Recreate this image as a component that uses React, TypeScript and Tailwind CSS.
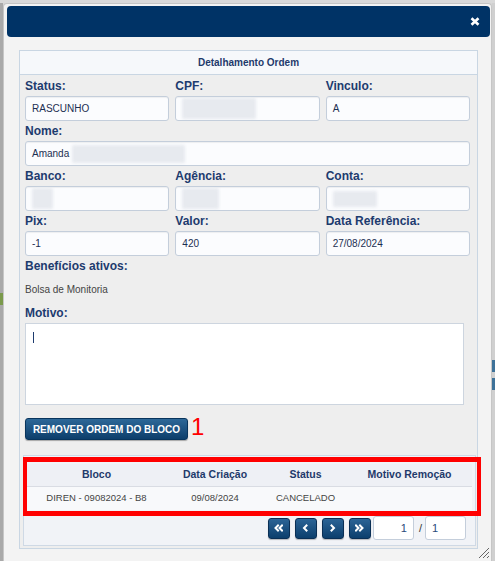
import React from "react";

const Label = ({ children }: { children: React.ReactNode }) => (
  <div className="h-[15px] leading-[15px] text-[12px] font-bold text-[#1d3b6e] mb-[2px] whitespace-nowrap">{children}</div>
);

const Blur = ({ w, h }: { w: number; h: number }) => (
  <span
    className="inline-block bg-[#e7eaef] blur-[1.5px] rounded-[2px]"
    style={{ width: w, height: h }}
  />
);

const Input = ({ children, pl = 6 }: { children?: React.ReactNode; pl?: number }) => (
  <div
    className="h-[25px] border border-[#c4cedb] rounded-[3px] bg-[#fbfcfe] shadow-[inset_0_1px_1px_rgba(0,0,0,0.06)] flex items-center text-[10px] text-[#1b2f52] whitespace-nowrap overflow-hidden"
    style={{ paddingLeft: pl }}
  >
    {children}
  </div>
);

const Field = ({ label, children }: { label: string; children?: React.ReactNode }) => (
  <div className="flex flex-col">
    <Label>{label}</Label>
    <Input>{children}</Input>
  </div>
);

const PagBtn = ({ d }: { d: string }) => (
  <div className="w-[22px] h-[21px] rounded-[3px] border border-[#0a2f55] bg-linear-to-b from-[#2b6496] to-[#0c3f6d] flex items-center justify-center shadow-[0_1px_1px_rgba(0,0,0,0.25)]">
    <svg width="9" height="8" viewBox="0 0 9 8">
      <path d={d} fill="none" stroke="#fff" strokeWidth="2" strokeLinecap="square" strokeLinejoin="miter" />
    </svg>
  </div>
);

export default function App() {
  return (
    <div className="w-[495px] h-[561px] overflow-hidden bg-[#d6d6d6] flex flex-col font-['Liberation_Sans',Arial,sans-serif] relative">
      <div className="h-[3px] shrink-0 bg-[#d9d9d9]" />
      <div className="flex flex-1 min-h-0">
        {/* left strip of page behind */}
        <div className="w-[3px] shrink-0 bg-[#a9a9a9] flex flex-col">
          <div className="h-[290px] shrink-0" />
          <div className="h-[12px] shrink-0 bg-[#7b9a4c]" />
        </div>

        {/* modal */}
        <div className="w-[489px] shrink-0 bg-[#f3f3f3] border border-[#c6c6c6] border-b-0 rounded-t-[4px] pl-[3px] pr-[1px] pt-[2px] relative">
          <div className="h-[31px] bg-[#003366] rounded-[4px] flex items-center justify-end pr-[10px]">
            <svg width="10" height="9" viewBox="0 0 10 9">
              <path d="M1.5 1.2 L8.5 7.8 M8.5 1.2 L1.5 7.8" stroke="#fff" strokeWidth="2.6" strokeLinecap="butt" />
            </svg>
          </div>

          <div className="px-[12px] pt-[13px]">
            <div className="border border-[#c9d6e3] bg-[#eeeeee] flex flex-col">
              <div className="h-[24px] bg-[#f6f8fb] border-b border-[#c9d6e3] flex items-center justify-center text-[10px] font-bold text-[#1f3a6b]">
                Detalhamento Ordem
              </div>

              <div className="pl-[5px] pr-[7px] pt-[4px] flex flex-col">
                <div className="flex flex-col gap-[3px]">
                  <div className="grid grid-cols-3 gap-x-[6px]">
                    <Field label="Status:">RASCUNHO</Field>
                    <Field label="CPF:"><Blur w={74} h={21} /></Field>
                    <Field label="Vinculo:">A</Field>
                  </div>
                  <Field label="Nome:">
                    <span>Amanda</span>
                    <span className="ml-[3px] flex items-center"><Blur w={113} h={18} /></span>
                  </Field>
                  <div className="grid grid-cols-3 gap-x-[6px]">
                    <Field label="Banco:"><Blur w={21} h={21} /></Field>
                    <Field label="Agência:"><Blur w={37} h={21} /></Field>
                    <Field label="Conta:"><Blur w={44} h={16} /></Field>
                  </div>
                  <div className="grid grid-cols-3 gap-x-[6px]">
                    <Field label="Pix:">-1</Field>
                    <Field label="Valor:">420</Field>
                    <Field label="Data Referência:">27/08/2024</Field>
                  </div>
                  <Label>Benefícios ativos:</Label>
                </div>
                <div className="mt-[4px] h-[20px] leading-[20px] text-[10px] text-[#444]">Bolsa de Monitoria</div>
                <div className="mt-[6px]">
                  <Label>Motivo:</Label>
                </div>
                <div className="w-[439px] h-[82px] bg-white border border-[#cdd5df] pl-[7px] pt-[8px]">
                  <div className="w-px h-[11px] bg-[#1d3b6e]" />
                </div>
                <div className="mt-[13px] flex items-start">
                  <div className="w-[163px] h-[22px] rounded-[3px] border border-[#08345c] bg-linear-to-b from-[#2d6898] to-[#0c3e6b] shadow-[0_1px_1px_rgba(0,0,0,0.3)] flex items-center justify-center text-[10px] font-bold text-white whitespace-nowrap">
                    REMOVER ORDEM DO BLOCO
                  </div>
                  <div className="ml-[3px] -mt-[3px] text-[24px] leading-[24px] text-[#ff0000]">1</div>
                </div>
              </div>

              {/* table container */}
              <div className="mt-[15px] ml-[3px] mr-[1px] mb-[2px] border border-[#cfd9e5] bg-[#f1f3f7] pt-[8px] px-[3px] pb-[5px] flex flex-col">
                <div className="flex flex-col">
                  <div className="h-[23px] bg-[#eef0f5] border-b border-[#d9dce3] flex items-center text-[10.5px] font-bold text-[#1f3a6b] whitespace-nowrap">
                    <div className="w-[139px] text-center">Bloco</div>
                    <div className="w-[98px] text-center">Data Criação</div>
                    <div className="w-[83px] text-center">Status</div>
                    <div className="flex-1 text-center">Motivo Remoção</div>
                  </div>
                  <div className="h-[23px] bg-[#f8f9fb] flex items-center text-[9.5px] text-[#444] whitespace-nowrap">
                    <div className="w-[139px] text-center">DIREN - 09082024 - B8</div>
                    <div className="w-[98px] text-center">09/08/2024</div>
                    <div className="w-[83px] text-center">CANCELADO</div>
                    <div className="flex-1 text-center"></div>
                  </div>
                </div>
                <div className="mt-[6px] mr-[6px] flex justify-end items-center">
                  <div className="flex gap-[5px]">
                    <PagBtn d="M4 1.5 L1.5 4 L4 6.5 M8 1.5 L5.5 4 L8 6.5" />
                    <PagBtn d="M5.5 1.5 L3 4 L5.5 6.5" />
                    <PagBtn d="M3.5 1.5 L6 4 L3.5 6.5" />
                    <PagBtn d="M1 1.5 L3.5 4 L1 6.5 M5 1.5 L7.5 4 L5 6.5" />
                  </div>
                  <div className="ml-[2px] w-[41px] h-[24px] border border-[#c4cedb] rounded-[3px] bg-white flex items-center justify-end pr-[6px] text-[11px] text-[#2a4a7a]">1</div>
                  <div className="ml-[5px] mr-[3px] text-[11px] text-[#333]">/</div>
                  <div className="w-[41px] h-[24px] border border-[#c4cedb] rounded-[3px] bg-white flex items-center pl-[6px] text-[11px] text-[#2a4a7a]">1</div>
                </div>
              </div>
            </div>
          </div>

          {/* resize handle */}
          <svg className="absolute right-[1px] bottom-[2px]" width="12" height="12" viewBox="0 0 12 12">
            <path d="M11 1 L1 11 M11 5 L5 11 M11 9 L9 11" stroke="#666" strokeWidth="1" />
          </svg>
        </div>

        {/* right strip */}
        <div className="flex-1 bg-[#d0d0d0] flex flex-col">
          <div className="h-[357px] shrink-0" />
          <div className="h-[12px] shrink-0 bg-[#3e7299]" />
          <div className="h-[6px] shrink-0" />
          <div className="h-[12px] shrink-0 bg-[#3e7299]" />
        </div>
      </div>

      {/* red annotation box */}
      <div className="absolute left-[23px] top-[457px] w-[458px] h-[59px] border-x-[4px] border-y-[5px] border-[#ff0000]" />
    </div>
  );
}
